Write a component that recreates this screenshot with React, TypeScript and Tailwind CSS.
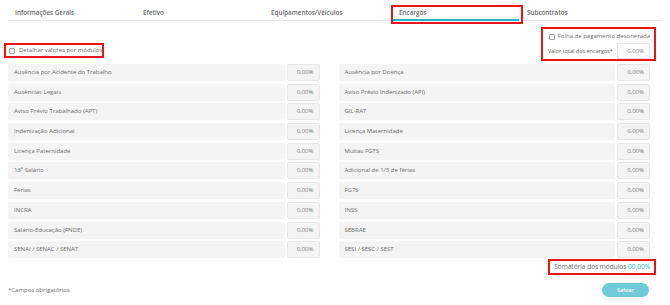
const left = [
  "Ausência por Acidente do Trabalho",
  "Ausências Legais",
  "Aviso Prévio Trabalhado (APT)",
  "Indenização Adicional",
  "Licença Paternidade",
  "13º Salário",
  "Férias",
  "INCRA",
  "Salário-Educação (FNDE)",
  "SENAI / SENAC / SENAT",
];

const right = [
  "Ausência por Doença",
  "Aviso Prévio Indenizado (API)",
  "GIL-RAT",
  "Licença Maternidade",
  "Multas FGTS",
  "Adicional de 1/3 de férias",
  "FGTS",
  "INSS",
  "SEBRAE",
  "SESI / SESC / SEST",
];

const tabs = ["Informações Gerais", "Efetivo", "Equipamentos/Veículos", "Encargos", "Subcontratos"];

function Row({ label }: { label: string }) {
  return (
    <div className="flex h-[17px] gap-[2px]">
      <div className="flex-1 bg-[#f4f4f4] rounded-[2px] flex items-center pl-[6px] text-[6px] text-[#6a6a6a] whitespace-nowrap">
        {label}
      </div>
      <div className="w-[33px] bg-[#f4f4f4] border border-[#e6e6e6] rounded-[2px] flex items-center justify-end pr-[5px] text-[6px] text-[#7a7a7a]">
        0,00%
      </div>
    </div>
  );
}

function Box() {
  return <span className="inline-block shrink-0 w-[6px] h-[6px] border border-[#a0a0a0] rounded-[1px] bg-white" />;
}

export default function App() {
  return (
    <div className="w-[670px] h-[305px] bg-white font-['Open_Sans',sans-serif] text-[#6a6a6a] overflow-hidden">
      <div className="mx-[8px] mt-[8px] flex border-b border-[#e6e8ee]">
        {tabs.map((t) => (
          <div key={t} className="relative w-[128px] pl-[7px] pb-[2px] text-[6.3px] leading-[10px] font-semibold text-[#6b6b6b] whitespace-nowrap">
            {t}
            {t === "Encargos" && (
              <>
                <div className="absolute left-[1px] right-[1px] bottom-[-1px] h-[2px] bg-[#1fb3cc]" />
                <div className="absolute -left-[1px] -right-[3px] -top-[3px] -bottom-[4px] border-2 border-[#e8151b]" />
              </>
            )}
          </div>
        ))}
      </div>

      <div className="flex justify-between pl-[4px] pr-[14px] mt-[6px]">
        <div className="mt-[16px] h-[15px] w-[100px] border-2 border-[#e8151b] flex items-center gap-[4px] pl-[3px] text-[6px] whitespace-nowrap">
          <Box />
          <span>Detalhar valores por módulos</span>
        </div>
        <div className="w-[115px] h-[34px] border-2 border-[#e8151b] flex flex-col items-end pr-[4px] pt-[3px]">
          <div className="flex items-center gap-[3px] text-[6px] h-[10px] whitespace-nowrap">
            <Box />
            <span>Folha de pagamento desonerada</span>
          </div>
          <div className="flex items-center gap-[4px] mt-[2px] w-full pl-[5px]">
            <span className="flex-1 text-[5.5px] text-[#555] whitespace-nowrap">Valor total dos encargos*</span>
            <div className="w-[34px] h-[16px] border border-[#e6e6e6] flex items-center justify-end pr-[5px] text-[6px] text-[#7a7a7a]">
              0,00%
            </div>
          </div>
        </div>
      </div>

      <div className="grid grid-cols-2 gap-x-[19px] px-[8px] pr-[20px] mt-[3px]">
        <div className="flex flex-col gap-[2.7px]">
          {left.map((l) => (
            <Row key={l} label={l} />
          ))}
        </div>
        <div className="flex flex-col gap-[2.7px]">
          {right.map((l) => (
            <Row key={l} label={l} />
          ))}
        </div>
      </div>

      <div className="flex justify-end pr-[14px] mt-[1px]">
        <div className="w-[108px] h-[16px] border-2 border-[#e8151b] flex items-center justify-end pr-[4px] text-[6.5px] text-[#6a6a6a] whitespace-nowrap">
          Somatória dos módulos&nbsp;<span className="text-[#1fb3cc]">00,00%</span>
        </div>
      </div>

      <div className="flex justify-between items-center pl-[8px] pr-[21px] mt-[8px]">
        <span className="text-[6px] text-[#6a6a6a]">*Campos obrigatórios</span>
        <button className="w-[47px] h-[14px] rounded-full bg-[#70cad9] text-white text-[6px] font-semibold">
          Salvar
        </button>
      </div>
    </div>
  );
}
